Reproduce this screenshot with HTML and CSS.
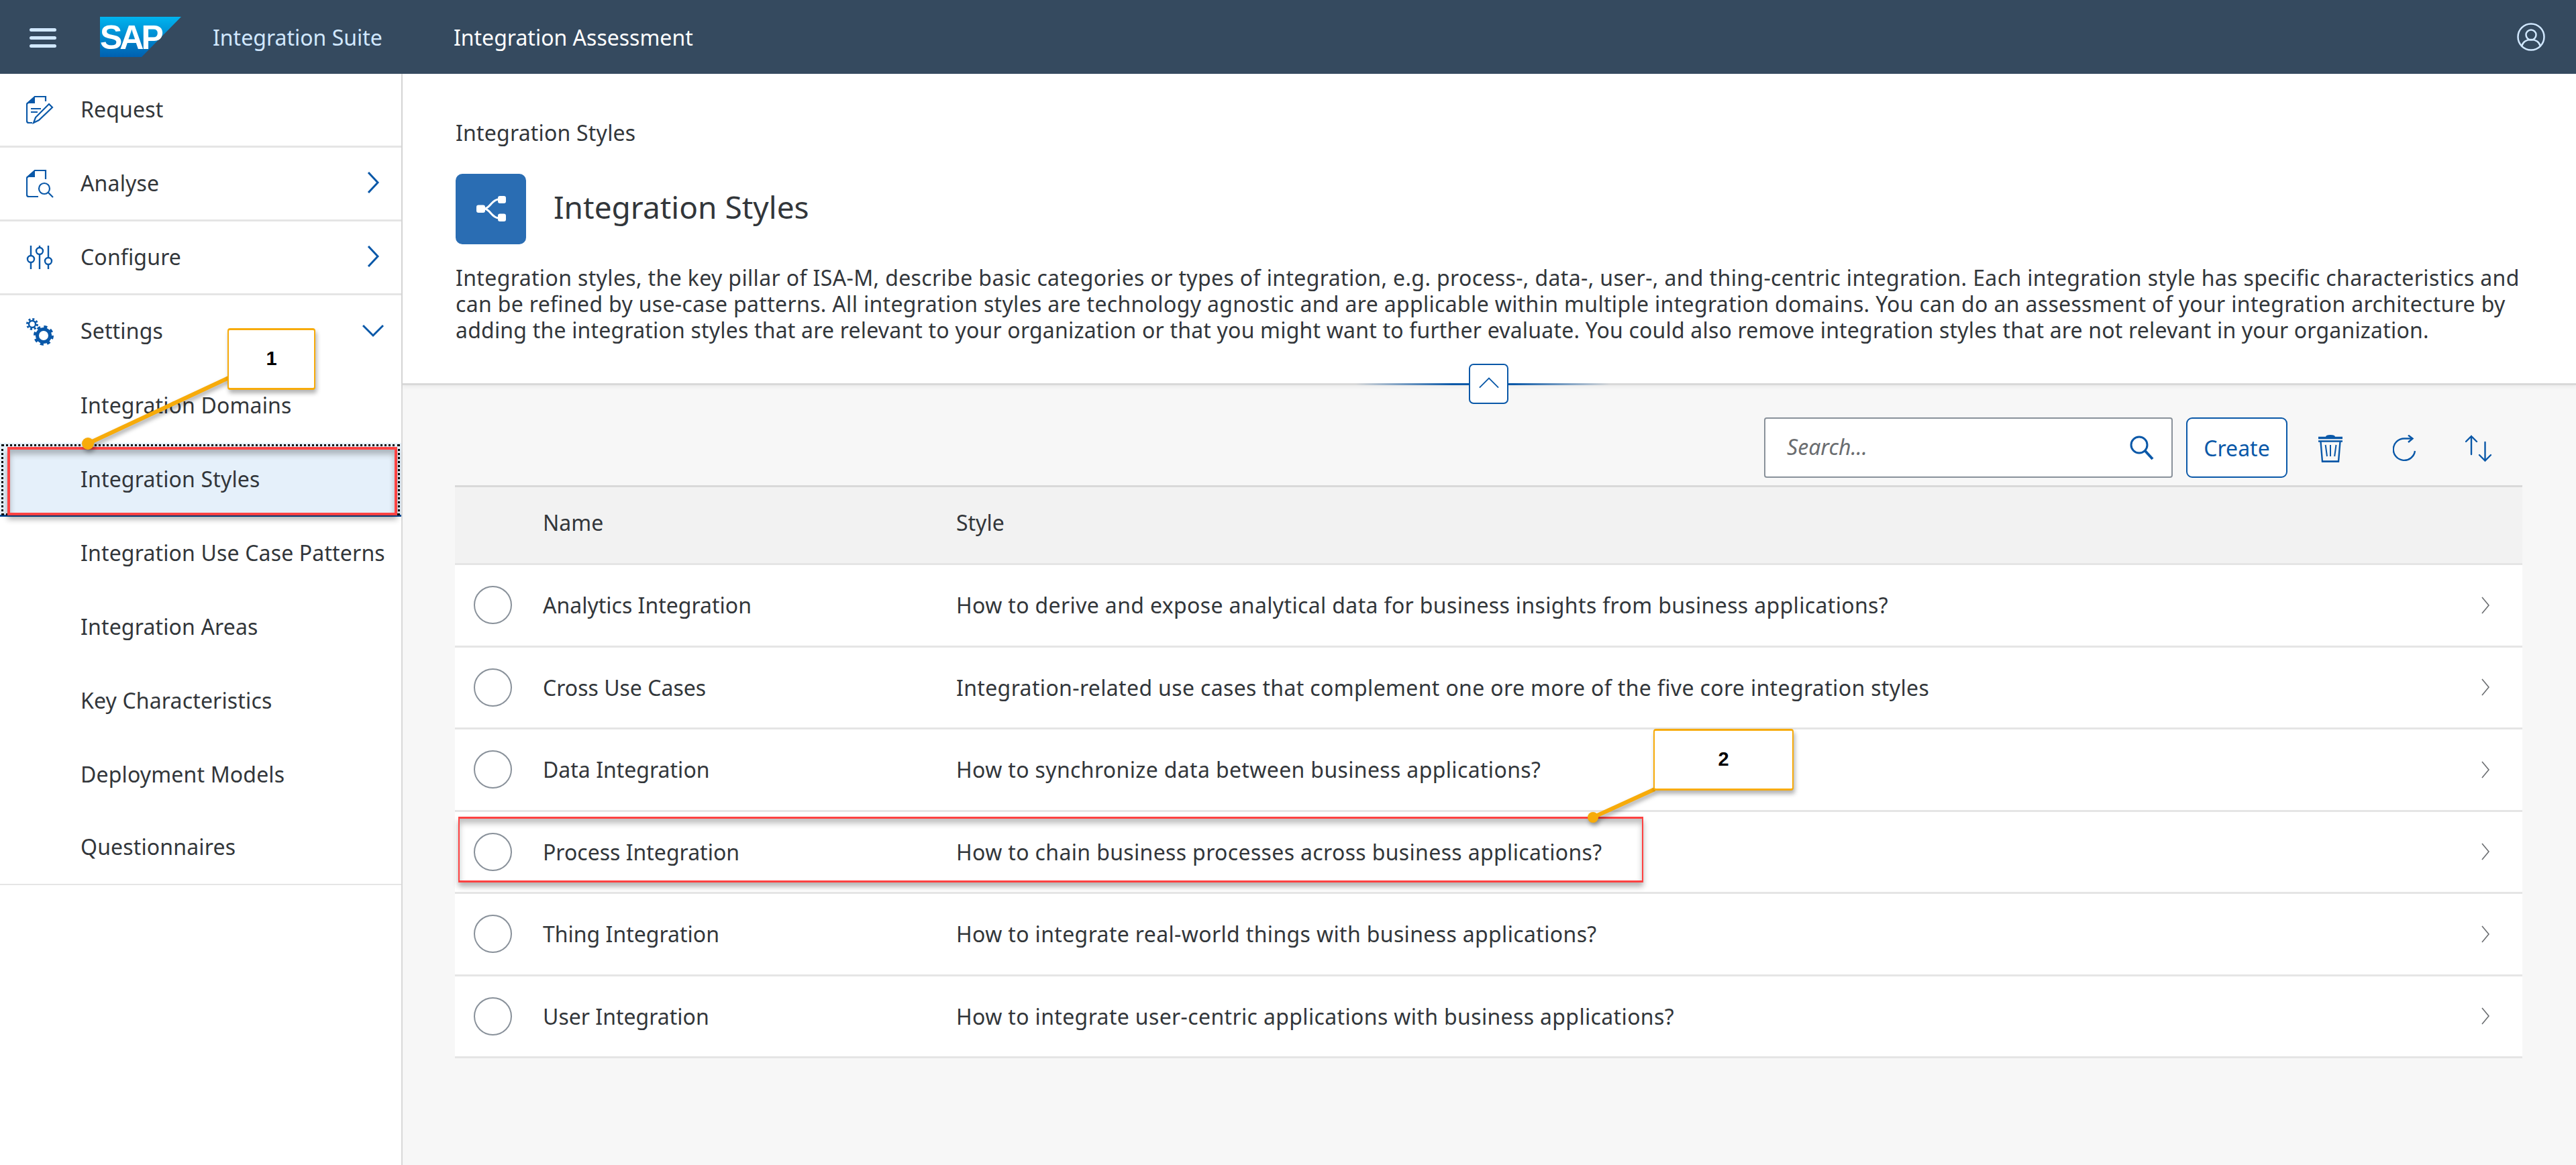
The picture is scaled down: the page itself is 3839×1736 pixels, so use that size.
FILE: index.html
```html
<!DOCTYPE html>
<html lang="en">
<head>
    <meta charset="UTF-8">
    <title>Integration Assessment</title>
    <link rel="stylesheet" href="styles.css">
</head>
<body>
<div id="page">
    <header id="shell">
        <span id="menu-btn"><i></i><i></i><i></i></span>
        <svg id="logo" width="121" height="60" viewBox="0 0 121 60">
            <defs>
                <linearGradient id="sap-blue" x1="0" y1="0" x2="0" y2="1">
                    <stop offset="0" stop-color="#00b4ef"/>
                    <stop offset="1" stop-color="#0060b0"/>
                </linearGradient>
            </defs>
            <polygon points="0,0 121,0 62,60 0,60" fill="url(#sap-blue)"/>
            <text x="0" y="48" class="logo-text">SAP</text>
        </svg>
        <span id="suite">Integration Suite</span>
        <span id="app-title">Integration Assessment</span>
        <svg id="user-icon" width="44" height="44" viewBox="0 0 44 44" fill="none" stroke="#d1e8ff" stroke-width="2.5">
            <circle cx="22" cy="22" r="19.5"/>
            <circle cx="22" cy="19" r="7.5"/>
            <path d="M8 36c2-7 8-10 14-10s12 3 14 10"/>
        </svg>
    </header>

    <div id="body-wrap">
        <nav id="side">
            <div class="nav-row">
                <svg class="nav-icon" width="42" height="42" viewBox="0 0 42 42" fill="none" stroke="#0a58a8" stroke-width="2.2">
                    <path d="M29 8V1H13L1 12v25q0 3 3 3h5"/>
                    <path d="M13 0L0 11h13z" fill="#0a58a8" stroke="none"/>
                    <path d="M7 19h15M7 24h10"/>
                    <path d="M34 12l5 5-20 19-8 4 3-8z"/>
                </svg>
                <span>Request</span>
            </div>
            <div class="nav-row">
                <svg class="nav-icon" width="42" height="42" viewBox="0 0 42 42" fill="none" stroke="#0a58a8" stroke-width="2.2">
                    <path d="M29 14V1H13L1 12v25q0 3 3 3h14"/>
                    <path d="M13 0L0 11h13z" fill="#0a58a8" stroke="none"/>
                    <circle cx="27" cy="28" r="8"/>
                    <path d="M33 34l7 7"/>
                </svg>
                <span>Analyse</span>
                <svg class="nav-arrow" width="20" height="32" viewBox="0 0 20 32" fill="none" stroke="#0a58a8" stroke-width="3"><path d="M3 1l14 15L3 31"/></svg>
            </div>
            <div class="nav-row">
                <svg class="nav-icon" width="42" height="36" viewBox="0 0 42 36" fill="none" stroke="#0a58a8" stroke-width="2.4">
                    <path d="M7 0v15M7 25v10M20 0v3M20 13v22M33 0v18M33 28v7"/>
                    <circle cx="7" cy="20" r="5"/>
                    <circle cx="20" cy="8" r="5"/>
                    <circle cx="33" cy="23" r="5"/>
                </svg>
                <span>Configure</span>
                <svg class="nav-arrow" width="20" height="32" viewBox="0 0 20 32" fill="none" stroke="#0a58a8" stroke-width="3"><path d="M3 1l14 15L3 31"/></svg>
            </div>
            <div class="nav-row">
                <svg class="nav-icon" width="42" height="42" viewBox="0 0 42 42" fill="none" stroke="#0a58a8">
                    <circle cx="9" cy="9" r="5" stroke-width="2.4"/>
                    <circle cx="9" cy="9" r="7.5" stroke-width="3" stroke-dasharray="3 2.9"/>
                    <circle cx="26" cy="26" r="9.5" stroke-width="5"/>
                    <circle cx="26" cy="26" r="13" stroke-width="4" stroke-dasharray="5 5.2"/>
                </svg>
                <span>Settings</span>
                <svg class="nav-arrow nav-down" width="32" height="20" viewBox="0 0 32 20" fill="none" stroke="#0a58a8" stroke-width="3"><path d="M1 2l15 15L31 2"/></svg>
            </div>
            <ul id="sub-nav">
                <li>Integration Domains</li>
                <li class="active">Integration Styles</li>
                <li>Integration Use Case Patterns</li>
                <li>Integration Areas</li>
                <li>Key Characteristics</li>
                <li>Deployment Models</li>
                <li>Questionnaires</li>
            </ul>
        </nav>

        <main id="content">
            <section id="intro">
                <div id="crumb">Integration Styles</div>
                <div id="title-row">
                    <span id="title-icon">
                        <svg width="60" height="60" viewBox="0 0 60 60" fill="#fff">
                            <path d="M20 29c9-1 10-13 21-14M20 29c9 1 10 13 21 14" stroke="#fff" stroke-width="3" fill="none"/>
                            <rect x="8" y="23.5" width="13" height="11.5" rx="3"/>
                            <rect x="40" y="10" width="12" height="11" rx="3"/>
                            <rect x="40" y="36.5" width="12" height="11.5" rx="3"/>
                        </svg>
                    </span>
                    <h1>Integration Styles</h1>
                </div>
                <p id="desc"><span class="line-1">Integration styles, the key pillar of ISA-M, describe basic categories or types of integration, e.g. process-, data-, user-, and thing-centric integration. Each integration style has specific characteristics and</span><br><span class="line-2">can be refined by use-case patterns. All integration styles are technology agnostic and are applicable within multiple integration domains. You can do an assessment of your integration architecture by</span><br><span class="line-3">adding the integration styles that are relevant to your organization or that you might want to further evaluate. You could also remove integration styles that are not relevant in your organization.</span></p>
                <div id="collapse-line"></div>
                <span id="collapse-btn">
                    <svg width="32" height="18" viewBox="0 0 32 18" fill="none" stroke="#0a58a8" stroke-width="2"><path d="M1 16L16 1l15 15"/></svg>
                </span>
            </section>

            <div id="list-area">
                <div id="toolbar">
                    <div id="search">
                        <span>Search...</span>
                        <svg width="38" height="38" viewBox="0 0 38 38" fill="none" stroke="#0a58a8"><circle cx="15" cy="15" r="12" stroke-width="3"/><path d="M24 24l11 12" stroke-width="4"/></svg>
                    </div>
                    <button id="create-btn">Create</button>
                    <svg class="tool tool-trash" width="36" height="41" viewBox="0 0 36 41" fill="none" stroke="#0a58a8" stroke-width="2">
                        <path d="M11 3q0-3 7-3t7 3z" fill="#0a58a8" stroke="none"/>
                        <path d="M0 4.5h36" stroke-width="3.4"/>
                        <path d="M0 9.5h36" stroke-width="2.6"/>
                        <path d="M3.5 10l2.5 30h24l2.5-30" stroke-width="2.4"/>
                        <path d="M5.5 39.6h25" stroke-width="2.6"/>
                        <path d="M10.7 15l2.3 17M18 15v17M26.5 15l-2.3 17"/>
                    </svg>
                    <svg class="tool tool-refresh" width="36" height="41" viewBox="0 0 36 41" fill="none" stroke="#0a58a8" stroke-width="2.4">
                        <path d="M29 5.5H17A16.2 16.2 0 1 0 33 24"/>
                        <path d="M23 .5l6.5 5-6.5 5.5"/>
                    </svg>
                    <svg class="tool tool-sort" width="40" height="41" viewBox="0 0 40 41" fill="none" stroke="#0a58a8" stroke-width="2.4" stroke-linecap="round">
                        <path d="M9 2v27M1 10l8-8 8 8"/>
                        <path d="M29.5 11v27M21 30l8.5 8.5L38 30"/>
                    </svg>
                </div>
                <div id="table">
                    <div class="row head"><span></span><span>Name</span><span>Style</span></div>
                    <div class="row"><i class="radio"></i><span>Analytics Integration</span><span class="style-text">How to derive and expose analytical data for business insights from business applications?</span><svg class="go" width="14" height="26" viewBox="0 0 14 26" fill="none" stroke="#6a6d70" stroke-width="1.6"><path d="M2 1l10 12L2 25"/></svg></div>
                    <div class="row"><i class="radio"></i><span>Cross Use Cases</span><span class="style-text">Integration-related use cases that complement one ore more of the five core integration styles</span><svg class="go" width="14" height="26" viewBox="0 0 14 26" fill="none" stroke="#6a6d70" stroke-width="1.6"><path d="M2 1l10 12L2 25"/></svg></div>
                    <div class="row"><i class="radio"></i><span>Data Integration</span><span class="style-text">How to synchronize data between business applications?</span><svg class="go" width="14" height="26" viewBox="0 0 14 26" fill="none" stroke="#6a6d70" stroke-width="1.6"><path d="M2 1l10 12L2 25"/></svg></div>
                    <div class="row"><i class="radio"></i><span>Process Integration</span><span class="style-text">How to chain business processes across business applications?</span><svg class="go" width="14" height="26" viewBox="0 0 14 26" fill="none" stroke="#6a6d70" stroke-width="1.6"><path d="M2 1l10 12L2 25"/></svg></div>
                    <div class="row"><i class="radio"></i><span>Thing Integration</span><span class="style-text">How to integrate real-world things with business applications?</span><svg class="go" width="14" height="26" viewBox="0 0 14 26" fill="none" stroke="#6a6d70" stroke-width="1.6"><path d="M2 1l10 12L2 25"/></svg></div>
                    <div class="row"><i class="radio"></i><span>User Integration</span><span class="style-text">How to integrate user-centric applications with business applications?</span><svg class="go" width="14" height="26" viewBox="0 0 14 26" fill="none" stroke="#6a6d70" stroke-width="1.6"><path d="M2 1l10 12L2 25"/></svg></div>
                </div>
            </div>
        </main>
    </div>

    <!-- screenshot annotations drawn over the app -->
    <div class="mark mark-1"></div>
    <div class="mark mark-2"></div>
    <svg id="leaders" width="3839" height="1736" viewBox="0 0 3839 1736">
        <path d="M345 561L131 661" class="leader"/>
        <circle cx="131" cy="661" r="9" class="leader-dot"/>
        <path d="M2466 1176L2374 1218" class="leader"/>
        <circle cx="2374" cy="1218" r="8" class="leader-dot"/>
    </svg>
    <div class="note note-1">1</div>
    <div class="note note-2">2</div>
</div>
</body>
</html>
```

FILE: styles.css
```css
*{
    margin: 0;
    padding: 0;
    box-sizing: border-box;
}
ul, ol{
    list-style: none;
}
body{
    font-family: "Noto Sans", "Liberation Sans", sans-serif;
    font-size: 32px;
    color: #32363a;
    background: #fff;
}
#page{
    width: 3839px;
    height: 1736px;
    position: relative;
    overflow: hidden;
    display: flex;
    flex-direction: column;
}

/* shell bar */
#shell{
    height: 110px;
    flex: none;
    background: #354a5f;
    display: flex;
    align-items: center;
    padding: 0 45px 0 44px;
}
#menu-btn{
    width: 40px;
    display: flex;
    flex-direction: column;
    gap: 7px;
    margin-top: 2px;
}
#menu-btn i{
    display: block;
    height: 5px;
    border-radius: 3px;
    background: #d1e8ff;
}
#logo{
    margin-left: 65px;
    flex: none;
}
.logo-text{
    font-family: "Liberation Sans", sans-serif;
    font-weight: 700;
    font-size: 50px;
    letter-spacing: -4px;
    fill: #fff;
}
#suite{
    margin-left: 47px;
    color: #d1e8ff;
}
#app-title{
    margin-left: 106px;
    color: #fff;
}
#user-icon{
    margin-left: auto;
}

/* layout */
#body-wrap{
    flex: 1;
    display: flex;
    min-height: 0;
}
#side{
    width: 600px;
    flex: none;
    background: #fff;
    border-right: 2px solid #d9d9d9;
    letter-spacing: .15px;
}
.nav-row{
    height: 110px;
    display: flex;
    align-items: center;
    padding-left: 120px;
    padding-bottom: 3px;
    border-bottom: 3px solid #e5e5e5;
    position: relative;
}
.nav-row:nth-child(4){
    border-bottom: 0;
    padding-bottom: 5px;
}
.nav-icon{
    position: absolute;
    left: 39px;
    top: 50%;
    transform: translateY(-50%);
}
.nav-arrow{
    margin-left: auto;
    margin-right: 32px;
}
.nav-down{
    margin-right: 26px;
}
#sub-nav{
    border-bottom: 2px solid #e5e5e5;
}
#sub-nav li{
    height: 110px;
    line-height: 107px;
    padding-left: 120px;
    white-space: nowrap;
}
#sub-nav li:last-child{
    height: 107px;
    line-height: 104px;
}
#sub-nav li.active{
    background: #e5f0fa;
    border-bottom: 3px solid #0a4f9c;
    outline: 3px dotted #000;
    outline-offset: -5px;
    line-height: 108px;
}

#content{
    flex: 1;
    min-width: 0;
    background: #f7f7f7;
    display: flex;
    flex-direction: column;
}
#intro{
    height: 464px;
    flex: none;
    background: #fff;
    border-bottom: 3px solid #d9d9d9;
    box-shadow: 0 3px 6px rgba(0,0,0,.05);
    padding: 68px 78px 0 79px;
    position: relative;
}
#crumb{
    line-height: 40px;
    letter-spacing: .2px;
}
#title-row{
    display: flex;
    align-items: center;
    margin-top: 41px;
}
#title-icon{
    width: 105px;
    height: 105px;
    border-radius: 10px;
    background: #2a6db3;
    display: flex;
    align-items: center;
    justify-content: center;
}
#title-row h1{
    font-size: 46px;
    font-weight: 400;
    margin-left: 41px;
    padding-bottom: 8px;
}
#desc{
    margin-top: 30px;
    line-height: 39px;
    white-space: nowrap;
}
#desc .line-1{
    letter-spacing: .36px;
}
#desc .line-2{
    letter-spacing: .325px;
}
#desc .line-3{
    letter-spacing: .19px;
}
#collapse-line{
    position: absolute;
    left: 1420px;
    bottom: -3px;
    width: 380px;
    height: 3px;
    background: linear-gradient(90deg, transparent, #0a58a8 38%, #0a58a8 62%, transparent);
}
#collapse-btn{
    position: absolute;
    left: 1589px;
    top: 432px;
    width: 59px;
    height: 60px;
    background: #fff;
    border: 2px solid #0a58a8;
    border-radius: 7px;
    display: flex;
    align-items: center;
    justify-content: center;
    z-index: 1;
}
#collapse-btn svg{
    width: 30px;
    margin-top: -2px;
}

#list-area{
    padding: 48px 80px 0 78px;
}
#toolbar{
    height: 90px;
    display: flex;
    align-items: center;
    justify-content: flex-end;
    margin-bottom: 11px;
}
#search{
    width: 609px;
    height: 90px;
    background: #fff;
    border: 2px solid #89919a;
    border-radius: 4px;
    display: flex;
    align-items: center;
    justify-content: space-between;
    padding: 0 25px 3px 32px;
    color: #6a6d70;
    font-style: italic;
}
#search svg{
    margin-top: 3px;
}
#create-btn{
    width: 151px;
    height: 90px;
    margin-left: 20px;
    margin-right: 46px;
    background: #fff;
    border: 2px solid #0a58a8;
    border-radius: 9px;
    color: #0a58a8;
    font-family: inherit;
    font-size: 32px;
}
.tool{
    margin-top: 3px;
}
.tool-trash{
    margin-right: 75px;
}
.tool-refresh{
    margin-right: 72px;
}
.tool-sort{
    margin-right: 45px;
}

#table{
    border-top: 3px solid #d9d9d9;
}
.row{
    height: 122.5px;
    background: #fff;
    border-bottom: 3px solid #e5e5e5;
    display: grid;
    grid-template-columns: 131px 616px 1fr 62px;
    align-items: center;
    white-space: nowrap;
}
.row.head{
    height: 116px;
    padding-bottom: 8px;
    background: #f2f2f2;
}
.style-text{
    letter-spacing: .35px;
}
.radio{
    display: block;
    width: 57px;
    height: 57px;
    border: 2px solid #89919a;
    border-radius: 50%;
    background: #fff;
    margin-left: 28px;
}

/* annotations */
.mark{
    position: absolute;
    border: 0 solid #ff4242;
    box-shadow: 0 6px 8px rgba(0,0,0,.3), inset 0 7px 8px rgba(0,0,0,.25);
}
.mark-1{
    left: 11px;
    top: 666px;
    width: 581px;
    height: 102px;
    border-width: 4px;
}
.mark-2{
    left: 683px;
    top: 1217px;
    width: 1766px;
    height: 98px;
    border-width: 3px 2px;
}
#leaders{
    position: absolute;
    left: 0;
    top: 0;
    filter: drop-shadow(2px 4px 3px rgba(0,0,0,.35));
}
.leader{
    stroke: #f7ab0a;
    stroke-width: 6;
    fill: none;
}
.leader-dot{
    fill: #f7ab0a;
}
.note{
    position: absolute;
    background: #fff;
    border: 2px solid #f7ab0a;
    border-top-width: 3px;
    border-bottom-width: 3px;
    border-radius: 4px;
    box-shadow: 2px 5px 6px rgba(0,0,0,.3);
    font-family: "Liberation Sans", sans-serif;
    font-weight: 700;
    font-size: 29px;
    color: #000;
    text-align: center;
}
.note-1{
    left: 339px;
    top: 489px;
    width: 131px;
    height: 92px;
    line-height: 84px;
}
.note-2{
    left: 2464px;
    top: 1086px;
    width: 209px;
    height: 92px;
    line-height: 84px;
}
```
